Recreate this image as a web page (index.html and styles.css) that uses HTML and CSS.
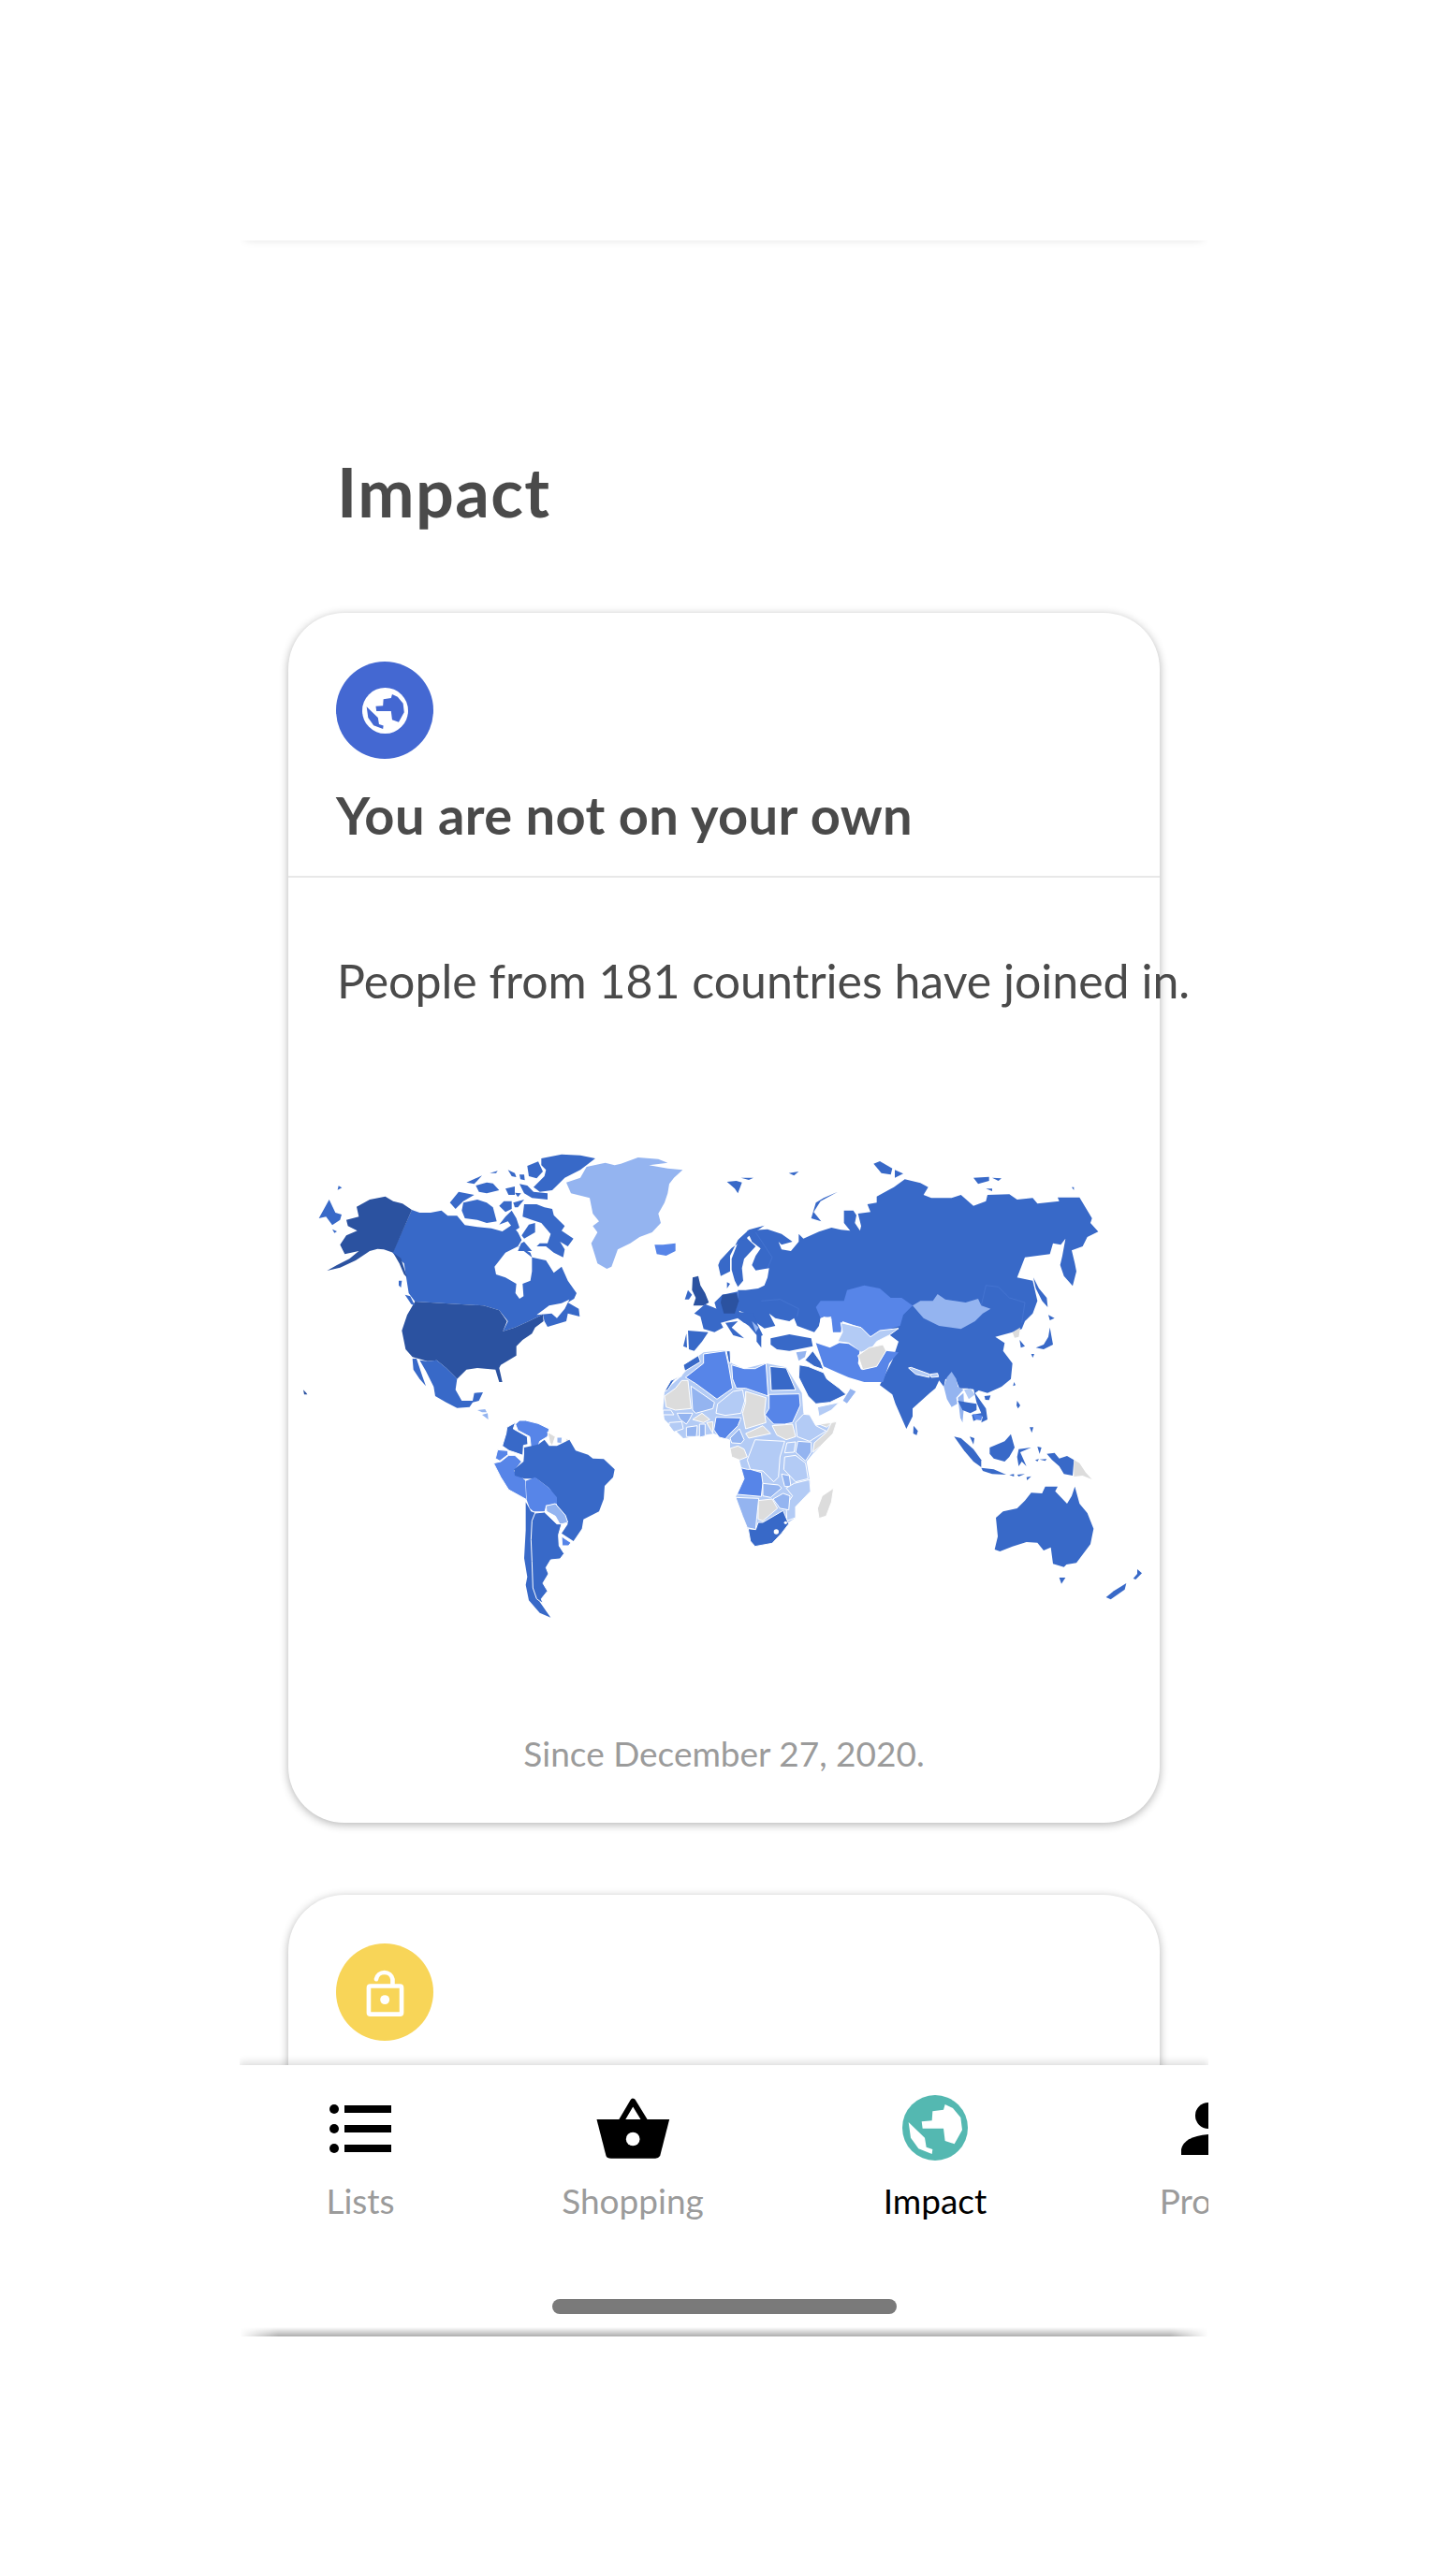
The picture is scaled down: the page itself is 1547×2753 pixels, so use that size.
FILE: index.html
```html
<!DOCTYPE html>
<html lang="en">
<head>
    <meta charset="UTF-8">
    <title>Impact</title>
    <link rel="stylesheet" href="styles.css">
</head>
<body>
<svg class="defs" width="0" height="0">
    <symbol id="globe" viewBox="193 58 210 210">
        <circle class="globe-disc" cx="298" cy="163" r="105"/>
        <path class="globe-land" d="M330 88 L325 105 L290 110 L288 140 L255 143 L258 165 L325 165 L330 205 L360 215 L385 170 L380 130 L355 100 Z"/>
        <path class="globe-land" d="M213 145 L265 195 L270 225 L290 232 L288 247 L245 230 L220 195 Z"/>
    </symbol>
</svg>
<div class="phone">
    <header class="top"></header>
    <main class="screen">
        <h1 class="page-title">Impact</h1>
        <section class="card">
            <div class="card-head">
                <div class="badge badge-blue">
                    <svg class="badge-globe"><use href="#globe"/></svg>
                </div>
                <h2 class="card-title">You are not on your own</h2>
            </div>
            <p class="card-text">People from 181 countries have joined in.</p>
            <svg class="map" viewBox="308 1200 931 560" width="931" height="560">
                <!-- north america -->
                <g transform="translate(320 1220) scale(.33333)">
                    <path class="mid" d="M125 136 L136 142 L122 149 Z"/>
                    <path class="mid" d="M95 180 L115 222 L135 228 L130 245 L105 262 L85 235 L62 240 Z"/>
                    <path class="mid" d="M105 275 L120 282 L112 287 Z"/>
                    <path class="mid" d="M360 213 L385 222 L420 222 L455 215 L475 232 L505 232 L530 262 L570 268 L615 272 L650 282 L680 262 L700 285 L712 310 L700 330 L740 350 L745 365 L790 375 L815 415 L840 395 L860 440 L888 480 L880 498 L860 510 L895 530 L898 555 L860 545 L855 570 L795 588 L785 570 L780 548 L730 572 L690 590 L652 602 L668 570 L640 535 L590 520 L370 507 L350 480 L342 430 L335 385 L298 350 Z"/>
                    <path class="white" d="M625 395 L660 350 L700 330 L745 365 L745 410 L740 440 L715 450 L718 490 L705 498 L692 480 L695 450 L660 430 L630 420 Z"/>
                    <path class="white" d="M760 550 L800 520 L840 512 L865 500 L850 530 L825 560 L808 545 Z"/>
                    <path class="mid" d="M775 48 L840 35 L900 38 L948 48 L900 85 L850 110 L810 150 L770 155 L750 140 L785 105 L790 85 L775 70 Z"/>
                    <path class="mid" d="M730 72 L765 58 L780 90 L760 112 L735 105 Z"/>
                    <path class="mid" d="M535 125 L585 103 L560 130 Z"/>
                    <path class="mid" d="M565 135 L600 125 L620 128 L640 150 L600 160 L575 155 Z"/>
                    <path class="mid" d="M610 95 L635 88 L630 95 Z"/>
                    <path class="mid" d="M668 85 L690 95 L695 108 L680 105 Z"/>
                    <path class="mid" d="M705 100 L720 100 L722 118 L708 115 Z"/>
                    <path class="mid" d="M660 145 L690 138 L690 165 L670 165 Z"/>
                    <path class="mid" d="M690 158 L710 160 L700 172 Z"/>
                    <path class="mid" d="M705 130 L730 135 L750 155 L795 160 L795 180 L745 175 L720 160 Z"/>
                    <path class="mid" d="M655 185 L680 185 L680 210 L660 220 L640 200 Z"/>
                    <path class="mid" d="M685 190 L720 180 L700 205 L690 205 Z"/>
                    <path class="mid" d="M510 155 L560 165 L525 185 L500 210 L482 190 Z"/>
                    <path class="mid" d="M525 190 L570 180 L600 190 L620 205 L632 250 L600 255 L570 245 L530 240 L520 215 Z"/>
                    <path class="mid" d="M660 235 L680 215 L695 240 L705 270 L690 280 L668 250 L640 260 Z"/>
                    <path class="mid" d="M720 195 L760 195 L785 205 L810 210 L815 230 L850 265 L840 280 L878 305 L860 330 L835 315 L850 340 L845 365 L815 350 L790 330 L760 330 L770 320 L795 320 L805 290 L775 255 L745 245 L715 235 Z"/>
                    <path class="mid" d="M735 260 L755 255 L755 285 L720 305 L712 295 Z"/>
                    <path class="mid" d="M710 320 L720 315 L745 345 L700 345 Z"/>
                    <path class="pale" d="M1030 65 L1085 45 L1150 50 L1180 62 L1120 70 L1180 80 L1228 85 L1200 110 L1185 130 L1180 160 L1170 190 L1150 225 L1158 255 L1130 285 L1090 300 L1060 320 L1020 340 L1000 395 L985 402 L955 385 L935 320 L955 285 L940 265 L960 250 L940 225 L930 175 L870 160 L855 125 L900 110 L920 75 L980 62 L1010 70 Z"/>
                    <path class="light" d="M1138 325 L1165 325 L1205 320 L1205 345 L1175 360 L1145 355 Z"/>
                    <path class="dark" d="M360 213 L300 350 L270 340 L250 338 L225 345 L215 352 L180 375 L130 398 L88 408 L120 390 L160 370 L190 345 L145 355 L130 325 L150 295 L185 280 L155 265 L150 245 L190 235 L183 203 L225 180 L275 170 L300 185 L330 193 Z"/>
                    <path class="dark" d="M300 350 L325 368 L345 430 L335 420 L320 385 Z"/>
                    <path class="dark" d="M370 507 L590 520 L640 535 L665 570 L652 602 L690 590 L730 572 L780 548 L782 570 L755 590 L745 610 L715 630 L695 650 L695 680 L645 710 L640 720 L650 765 L640 765 L628 725 L570 720 L535 725 L505 755 L495 745 L470 720 L440 695 L410 698 L362 685 L340 660 L328 600 L345 550 Z"/>
                    <path class="mid" d="M385 695 L410 698 L440 695 L470 720 L495 745 L505 755 L500 790 L520 825 L555 825 L560 800 L588 798 L575 825 L555 830 L545 845 L505 848 L470 830 L435 810 L430 780 L405 730 Z"/>
                    <path class="mid" d="M362 690 L375 690 L395 750 L405 778 L385 755 L365 725 Z"/>
                    <path class="mid" d="M318 440 L328 440 L325 462 L318 455 Z"/>
                    <path class="mid" d="M338 485 L355 490 L370 520 L358 515 Z"/>
                    <path class="dark" d="M12 790 L22 800 L25 805 L15 805 Z"/>
                    <path class="pale" d="M570 855 L595 852 L600 862 L585 862 Z"/>
                    <path class="pale" d="M585 870 L603 865 L605 885 Z"/>
                </g>
                <!-- south america -->
                <g class="lined" transform="translate(480 1510) scale(.33333)">
                    <path class="mid" d="M212 25 L205 45 L250 70 L252 95 L238 98 L236 130 L208 120 L192 115 L170 100 L182 60 L185 40 Z"/>
                    <path class="light" d="M225 18 L245 18 L285 28 L320 45 L315 70 L290 85 L285 100 L262 105 L258 70 L220 50 L212 30 Z"/>
                    <path class="grey" d="M315 55 L340 70 L330 100 L322 88 Z"/>
                    <path class="pale" d="M345 72 L362 72 L360 92 L345 90 Z"/>
                    <path class="grey" d="M372 75 L388 82 L378 95 Z"/>
                    <path class="light" d="M155 112 L188 115 L188 128 L162 148 L148 140 Z"/>
                    <path class="light" d="M142 155 L165 150 L190 130 L210 130 L232 150 L208 180 L245 210 L248 272 L190 240 L165 200 Z"/>
                    <path class="mid noline" d="M240 105 L285 95 L305 80 L320 100 L345 100 L385 80 L405 115 L445 128 L460 140 L495 142 L530 175 L525 200 L498 228 L495 270 L480 310 L430 335 L425 365 L398 405 L360 380 L380 350 L365 320 L345 290 L340 265 L320 235 L280 205 L240 205 L210 195 L208 175 L238 150 L240 125 Z"/>
                    <path class="light noline" d="M245 212 L275 200 L320 235 L345 265 L345 285 L310 290 L305 310 L270 310 L258 300 L248 272 Z"/>
                    <path class="pale" d="M310 292 L340 285 L372 322 L380 345 L355 352 L340 325 L312 310 Z"/>
                    <path class="light" d="M360 390 L390 410 L382 420 L362 420 Z"/>
                    <path class="mid noline" d="M245 280 L262 310 L290 320 L290 600 L325 650 L290 635 L255 595 L245 545 L250 520 L240 460 L245 370 Z"/>
                    <path class="mid" d="M275 315 L305 312 L345 350 L360 350 L350 385 L352 420 L368 445 L355 462 L325 465 L310 490 L318 510 L300 540 L315 565 L295 590 L300 605 L280 590 L268 555 L265 470 L262 400 L265 340 Z"/>
                </g>
                <!-- eurasia -->
                <g transform="translate(720 1225) scale(.33333)">
                    <path class="mid" d="M300 260 L345 275 L380 300 L345 310 L335 300 L345 325 L375 330 L400 300 L400 275 L415 290 L465 268 L505 255 L535 262 L565 265 L545 240 L545 200 L575 200 L585 215 L580 240 L600 270 L600 295 L590 290 L600 250 L590 210 L630 205 L620 180 L650 175 L650 155 L705 125 L740 100 L790 112 L815 125 L800 150 L825 160 L890 160 L920 150 L960 185 L1000 170 L1005 150 L1075 148 L1100 165 L1150 160 L1165 178 L1235 170 L1230 158 L1300 158 L1340 225 L1335 240 L1360 268 L1325 285 L1310 315 L1275 328 L1285 370 L1290 395 L1278 442 L1250 410 L1238 375 L1245 345 L1255 290 L1240 310 L1215 305 L1205 340 L1125 350 L1100 415 L1150 425 L1165 490 L1150 530 L1125 555 L1115 580 L1085 590 L1030 605 L1060 625 L1055 650 L1085 690 L1080 740 L1050 765 L1005 785 L970 775 L940 770 L915 770 L905 745 L870 740 L865 765 L850 745 L838 770 L820 785 L765 835 L765 860 L745 900 L710 820 L700 790 L660 760 L700 680 L720 620 L640 560 L500 530 L470 545 L465 570 L450 590 L395 570 L385 545 L370 555 L345 550 L325 545 L305 530 L325 570 L290 578 L265 560 L255 545 L230 530 L205 520 L205 455 L230 455 L270 450 L290 440 L300 415 L305 385 L262 392 L250 375 L262 345 L278 322 L250 300 L235 265 Z"/>
                    <path class="mid" d="M130 495 L155 470 L205 460 L210 530 L255 545 L268 565 L225 560 L205 545 L150 560 Z"/>
                    <path class="border" d="M985 505 L1000 440 L1040 445 L1075 480 L1125 495 L1115 560"/>
                    <path class="border" d="M262 270 L315 350 L300 385"/>
                    <path class="border" d="M280 490 L340 485 L400 515 L395 540"/>
                    <path class="mid" d="M210 290 L235 270 L235 290 L262 315 L225 355 L218 385 L222 425 L205 445 L195 425 L185 390 L185 355 Z"/>
                    <path class="mid" d="M290 248 L240 262 L205 295 L180 345 L180 395 L150 410 L142 375 L148 360 L185 320 Z"/>
                    <path class="mid" d="M170 430 L180 435 L170 450 Z"/>
                    <path class="mid" d="M170 108 L200 105 L218 110 L205 145 L195 130 Z"/>
                    <path class="mid" d="M215 95 L255 95 L240 102 Z"/>
                    <path class="mid" d="M368 80 L400 75 L385 88 Z"/>
                    <path class="mid" d="M525 140 L480 160 L455 175 L440 225 L472 235 L448 205 L470 170 Z"/>
                    <path class="mid" d="M960 95 L1010 92 L1010 105 L975 115 Z"/>
                    <path class="mid" d="M1020 95 L1050 97 L1040 105 Z"/>
                    <path class="mid" d="M1000 130 L1020 130 L1020 138 Z"/>
                    <path class="mid" d="M640 50 L660 42 L700 65 L695 85 L665 80 Z"/>
                    <path class="mid" d="M708 70 L735 82 L708 95 Z"/>
                    <path class="mid" d="M1275 125 L1282 125 L1282 135 Z"/>
                    <path class="mid" d="M1152 415 L1170 450 L1195 480 L1198 510 L1180 490 L1160 450 Z"/>
                    <path class="mid" d="M1200 535 L1220 545 L1205 552 Z"/>
                    <path class="mid" d="M1205 575 L1215 630 L1185 645 L1160 640 L1185 630 L1200 605 Z"/>
                    <path class="mid" d="M1145 660 L1155 660 L1150 672 Z"/>
                    <path class="mid" d="M1108 615 L1125 635 L1112 640 Z"/>
                    <path class="grey" d="M1085 590 L1110 575 L1105 605 L1092 608 Z"/>
                    <path class="light" d="M455 510 L470 490 L545 490 L555 455 L610 440 L660 450 L695 480 L730 480 L765 505 L735 535 L725 570 L705 575 L670 590 L640 610 L625 600 L600 575 L540 555 L535 590 L510 590 L505 545 L480 540 L470 545 Z"/>
                    <path class="pale" d="M765 505 L790 490 L830 490 L845 468 L870 485 L900 490 L935 495 L975 483 L985 505 L1015 515 L990 530 L965 555 L920 580 L850 570 L800 545 Z"/>
                    <path class="white" d="M470 545 L505 540 L490 570 L500 600 L525 625 L500 640 L470 620 L465 580 Z"/>
                    <path class="paler stroked" d="M535 560 L600 575 L630 605 L660 585 L720 578 L690 600 L650 620 L635 640 L600 655 L560 625 L525 620 L540 590 Z"/>
                    <path class="light" d="M455 625 L500 640 L530 625 L560 628 L595 650 L590 690 L600 710 L650 700 L680 650 L720 655 L690 690 L670 750 L610 750 L560 735 L525 720 L480 700 L470 670 Z"/>
                    <path class="grey stroked" d="M590 665 L625 640 L670 630 L680 650 L650 700 L605 710 Z"/>
                    <path class="paler stroked" d="M752 705 L760 703 L820 725 L818 735 L775 725 Z"/>
                    <path class="paler stroked" d="M822 725 L845 722 L848 733 L825 735 Z"/>
                    <path class="dark" d="M60 415 L78 410 L85 440 L100 465 L112 495 L95 505 L62 505 L70 480 L58 455 Z"/>
                    <path class="mid" d="M45 455 L58 470 L48 485 L35 485 Z"/>
                    <path class="mid" d="M100 500 L125 510 L150 520 L150 560 L158 575 L130 590 L95 580 L85 540 L65 530 Z"/>
                    <path class="dark" d="M155 470 L200 465 L208 490 L195 530 L160 530 L150 495 Z"/>
                    <path class="mid" d="M45 585 L110 590 L90 620 L65 650 L48 645 Z"/>
                    <path class="mid" d="M40 595 L30 635 L42 640 Z"/>
                    <path class="mid" d="M165 560 L205 555 L185 575 L225 610 L190 600 Z"/>
                    <path class="mid" d="M205 525 L255 530 L268 565 L285 600 L270 605 L240 570 L205 545 Z"/>
                    <path class="pale" d="M250 555 L272 575 L262 590 Z"/>
                    <path class="mid" d="M265 600 L280 590 L280 640 L265 620 Z"/>
                    <path class="mid" d="M310 610 L370 597 L440 610 L445 635 L370 650 L330 645 L310 630 Z"/>
                    <path class="pale" d="M392 655 L425 650 L420 670 L400 682 Z"/>
                </g>
                <!-- africa and arabia -->
                <g class="lined" transform="translate(700 1440) scale(.33333)">
                    <path class="paler noline" d="M30 135 L85 85 L140 20 L155 10 L225 3 L245 45 L285 62 L355 45 L420 58 L470 140 L475 205 L515 245 L582 232 L570 270 L505 335 L485 360 L495 418 L498 455 L450 505 L450 540 L420 560 L375 622 L320 632 L295 572 L258 475 L262 465 L285 415 L270 355 L240 320 L240 290 L188 270 L90 285 L30 225 L25 195 Z"/>
                    <path class="mid" d="M90 50 L138 20 L145 40 L95 70 Z"/>
                    <path class="mid" d="M30 135 L50 100 L85 85 L60 100 L40 130 Z"/>
                    <path class="light" d="M97 90 L155 45 L155 15 L225 5 L235 50 L248 125 L198 160 L130 110 Z"/>
                    <path class="light" d="M245 50 L285 62 L320 62 L355 45 L362 150 L290 125 L260 125 L248 95 Z"/>
                    <path class="mid" d="M368 55 L420 60 L450 130 L372 132 Z"/>
                    <path class="mid" d="M228 5 L240 5 L242 45 L235 40 Z"/>
                    <path class="light" d="M365 145 L462 143 L465 180 L440 235 L415 240 L380 240 L352 210 L365 190 Z"/>
                    <path class="mid" d="M462 50 L490 55 L540 75 L550 95 L590 125 L612 145 L560 170 L515 175 L490 150 L460 90 Z"/>
                    <path class="paler" d="M520 185 L590 170 L565 195 L525 215 Z"/>
                    <path class="pale" d="M600 165 L625 125 L645 135 L615 175 Z"/>
                    <path class="mid" d="M480 35 L505 5 L530 40 L540 65 L510 55 Z"/>
                    <path class="grey" d="M30 150 L65 125 L85 100 L105 100 L115 190 L65 195 L35 185 Z"/>
                    <path class="pale" d="M115 118 L190 170 L185 190 L130 205 L120 195 Z"/>
                    <path class="paler" d="M200 175 L250 135 L280 130 L287 165 L275 205 L225 212 L195 205 Z"/>
                    <path class="grey" d="M290 135 L355 155 L350 205 L355 235 L290 255 L280 205 L290 170 Z"/>
                    <path class="paler" d="M25 195 L50 195 L60 210 L25 210 Z"/>
                    <path class="pale" d="M70 205 L120 205 L110 225 L100 240 L80 225 Z"/>
                    <path class="grey" d="M120 225 L150 205 L175 225 L155 235 Z"/>
                    <path class="pale" d="M100 250 L135 245 L132 280 L100 280 Z"/>
                    <path class="pale" d="M142 240 L160 240 L160 278 L142 282 Z"/>
                    <path class="paler" d="M45 235 L85 232 L90 255 L60 265 L45 245 Z"/>
                    <path class="grey" d="M165 235 L185 232 L185 270 Z"/>
                    <path class="light" d="M195 218 L275 220 L265 245 L240 270 L225 287 L205 282 L188 258 Z"/>
                    <path class="pale" d="M240 285 L270 255 L285 290 L275 302 L245 300 Z"/>
                    <path class="grey" d="M240 318 L265 310 L285 320 L295 345 L270 355 L245 345 Z"/>
                    <path class="grey" d="M290 270 L345 245 L370 270 L300 285 Z"/>
                    <path class="grey" d="M375 245 L440 240 L450 280 L420 290 L390 275 Z"/>
                    <path class="paler" d="M450 235 L475 208 L495 210 L515 245 L548 262 L495 295 L455 280 Z"/>
                    <path class="grey" d="M505 330 L510 300 L550 265 L565 235 L582 232 L570 270 L530 310 Z"/>
                    <path class="grey" d="M525 240 L565 235 L550 250 Z"/>
                    <path class="pale" d="M457 295 L500 298 L500 330 L482 358 L450 330 Z"/>
                    <path class="paler" d="M422 300 L450 297 L445 330 L415 332 Z"/>
                    <path class="paler" d="M320 290 L415 295 L400 345 L395 410 L380 425 L345 390 L305 385 L295 355 Z"/>
                    <path class="paler" d="M415 345 L450 340 L482 365 L490 415 L450 425 L412 385 Z"/>
                    <path class="light" d="M275 380 L295 385 L305 385 L340 395 L345 430 L340 472 L262 465 L285 415 Z"/>
                    <path class="pale" d="M345 430 L395 435 L405 445 L370 475 L345 470 Z"/>
                    <path class="pale" d="M405 400 L430 405 L435 440 L415 440 Z"/>
                    <path class="paler" d="M445 430 L495 418 L498 455 L450 505 L450 540 L422 550 L420 500 L440 470 L420 445 Z"/>
                    <path class="pale" d="M378 480 L410 462 L432 470 L428 515 L400 510 Z"/>
                    <path class="grey" d="M330 485 L375 480 L392 510 L345 550 L330 545 Z"/>
                    <path class="pale" d="M258 475 L332 478 L325 545 L322 578 L295 572 L280 535 Z"/>
                    <path class="mid" d="M298 575 L322 578 L330 555 L345 555 L410 517 L428 560 L405 590 L375 622 L320 632 L305 615 Z"/>
                    <circle class="white" cx="388" cy="585" r="8"/>
                    <circle class="white" cx="418" cy="556" r="5"/>
                    <path class="grey" d="M572 445 L565 490 L548 535 L525 542 L520 510 L535 470 Z"/>
                </g>
                <!-- south east asia and oceania -->
                <g transform="translate(940 1440) scale(.33333)">
                    <path class="mid" d="M108 245 L122 262 L118 275 L107 270 Z"/>
                    <path class="pale" d="M205 120 L215 90 L230 72 L245 95 L250 120 L268 130 L245 155 L248 175 L230 185 L215 160 Z"/>
                    <path class="pale" d="M250 155 L268 140 L270 180 L265 235 L258 220 Z"/>
                    <path class="mid" d="M250 165 L280 170 L310 175 L310 195 L290 205 L265 195 Z"/>
                    <path class="paler" d="M270 130 L290 125 L305 145 L285 160 Z"/>
                    <path class="mid" d="M300 125 L320 130 L305 140 L340 190 L345 225 L325 235 L330 215 L300 230 L295 210 L325 205 L310 170 Z"/>
                    <path class="light" d="M298 208 L328 212 L325 228 L305 225 Z"/>
                    <path class="mid" d="M335 150 L355 148 L350 163 L338 162 Z"/>
                    <path class="mid" d="M430 105 L435 115 L427 118 Z"/>
                    <path class="mid" d="M440 165 L450 180 L443 190 L438 180 Z"/>
                    <path class="mid" d="M480 250 L492 250 L487 268 Z"/>
                    <path class="mid" d="M238 280 L260 285 L300 320 L325 355 L325 378 L300 360 L270 325 Z"/>
                    <path class="mid" d="M325 380 L365 385 L405 402 L360 400 L330 390 Z"/>
                    <path class="mid" d="M288 280 L303 285 L300 305 Z"/>
                    <path class="mid" d="M352 315 L375 305 L400 295 L420 272 L432 315 L415 345 L400 360 L365 350 L352 335 Z"/>
                    <path class="mid" d="M445 320 L485 315 L450 330 L470 375 L455 360 L445 375 L440 345 Z"/>
                    <path class="mid" d="M505 312 L518 315 L512 335 Z"/>
                    <path class="mid" d="M498 355 L510 352 L505 360 Z"/>
                    <path class="mid" d="M512 353 L535 352 L530 358 Z"/>
                    <path class="mid" d="M415 403 L430 400 L430 408 Z"/>
                    <path class="mid" d="M440 402 L465 400 L445 408 Z"/>
                    <path class="mid" d="M470 410 L485 407 L472 420 Z"/>
                    <path class="mid" d="M535 335 L560 332 L575 350 L600 342 L622 355 L618 405 L590 400 L575 375 L552 355 Z"/>
                    <path class="grey" d="M622 355 L640 365 L660 395 L680 417 L650 405 L622 408 Z"/>
                    <path class="mid" d="M372 540 L395 520 L440 510 L465 485 L485 460 L520 462 L530 440 L570 440 L562 455 L600 495 L615 470 L625 440 L640 495 L665 525 L685 575 L675 625 L630 685 L598 690 L590 698 L555 688 L548 635 L525 645 L505 620 L470 618 L425 632 L385 648 L368 642 L378 600 Z"/>
                    <path class="mid" d="M575 732 L595 732 L582 752 Z"/>
                    <path class="mid" d="M825 705 L840 718 L820 738 L812 735 L825 720 Z"/>
                    <path class="mid" d="M790 750 L785 770 L740 802 L725 795 L750 775 Z"/>
                </g>
            </svg>
            <p class="card-note">Since December 27, 2020.</p>
        </section>
        <section class="card">
            <div class="card-head">
                <div class="badge badge-yellow">
                    <svg class="badge-lock" viewBox="270 125 128 160">
                        <path d="M305 162 A27 27 0 0 1 358 162 L358 178"/>
                        <rect x="281" y="184" width="106" height="91" rx="5"/>
                        <circle cx="333" cy="228" r="15"/>
                    </svg>
                </div>
            </div>
        </section>
    </main>
    <nav class="tabbar">
        <div class="tabs">
            <div class="tab">
                <svg class="tab-icon icon-lists" viewBox="0 0 66 56">
                    <circle cx="5" cy="7" r="5"/><rect x="16" y="3" width="50" height="8"/>
                    <circle cx="5" cy="28" r="5"/><rect x="16" y="24" width="50" height="8"/>
                    <circle cx="5" cy="49" r="5"/><rect x="16" y="45" width="50" height="8"/>
                </svg>
                <span class="tab-label">Lists</span>
            </div>
            <div class="tab">
                <svg class="tab-icon icon-basket" viewBox="945 55 245 210">
                    <path class="basket-handle" d="M1030 140 L1068 75 L1108 140"/>
                    <path d="M952 133 L1185 133 L1155 250 Q1150 258 1140 258 L998 258 Q985 258 982 250 Z"/>
                    <circle class="basket-hole" cx="1068" cy="196" r="22"/>
                </svg>
                <span class="tab-label">Shopping</span>
            </div>
            <div class="tab tab-active">
                <svg class="tab-icon icon-globe"><use href="#globe"/></svg>
                <span class="tab-label">Impact</span>
            </div>
            <div class="tab">
                <svg class="tab-icon icon-person" viewBox="0 0 58 56">
                    <circle cx="29" cy="14" r="14"/>
                    <path d="M0 56 L0 50 Q3 36 29 34 Q55 36 58 50 L58 56 Z"/>
                </svg>
                <span class="tab-label">Profile</span>
            </div>
        </div>
        <div class="home-bar"></div>
    </nav>
</div>
</body>
</html>
```

FILE: styles.css
```css
* {
    margin: 0;
    padding: 0;
    box-sizing: border-box;
}

body {
    background: #fff;
    font-family: "Lato", "Noto Sans", sans-serif;
    color: #4a4a4a;
}

.defs {
    position: absolute;
}

.phone {
    width: 1035px;
    height: 2497px;
    margin: 0 auto;
    display: flex;
    flex-direction: column;
    overflow: hidden;
}

.top {
    height: 257px;
    flex: none;
    background: #fff;
    box-shadow: 0 4px 10px -6px rgba(0, 0, 0, .16);
    position: relative;
    z-index: 1;
}

.screen {
    flex: 1;
    min-height: 0;
    overflow: hidden;
    padding: 225px 52px 0;
}

.page-title {
    font-size: 72px;
    line-height: 86px;
    font-weight: 700;
    letter-spacing: 1.4px;
    margin: 0 0 87px 52px;
}

.card {
    background: #fff;
    border-radius: 60px;
    box-shadow: 0 2px 10px rgba(0, 0, 0, .3);
    margin-bottom: 77px;
    padding-bottom: 52px;
}

.card-head {
    padding: 52px 51px 0;
    height: 283px;
    border-bottom: 2px solid #e8e8e8;
}

.badge {
    width: 104px;
    height: 104px;
    border-radius: 50%;
    display: flex;
    align-items: center;
    justify-content: center;
}

.badge-blue {
    background: #4468d2;
    --disc: #fff;
    --land: #4468d2;
}

.badge-yellow {
    background: #f8d558;
}

.badge-globe {
    width: 49px;
    height: 49px;
}

.badge-lock {
    width: 43px;
    height: 53px;
    fill: none;
    stroke: #fff;
    stroke-width: 14;
    stroke-linecap: round;
}

.badge-lock circle {
    fill: #fff;
    stroke: none;
}

.globe-disc {
    fill: var(--disc);
}

.globe-land {
    fill: var(--land);
}

.card-title {
    font-size: 56px;
    line-height: 64px;
    font-weight: 700;
    letter-spacing: .4px;
    margin-top: 28px;
    white-space: nowrap;
}

.card-text {
    font-size: 50px;
    line-height: 60px;
    margin: 80px 0 0 52px;
    white-space: nowrap;
}

.map {
    display: block;
    margin-top: 124px;
}

.map path {
    stroke-linejoin: round;
}

.dark { fill: #2b52a0; }
.mid { fill: #3869c8; }
.light { fill: #5785e8; }
.pale { fill: #94b4f0; }
.paler { fill: #b3cbf5; }
.grey { fill: #dcdcdc; }
.white { fill: #fff; }

.border {
    fill: none;
    stroke: #4a78d4;
    stroke-width: 2;
}

.lined path,
.stroked {
    stroke: #fff;
    stroke-width: 3;
}

.lined .noline {
    stroke: none;
}

.card-note {
    font-size: 37px;
    line-height: 44px;
    color: #9b9b9b;
    text-align: center;
    margin-top: 90px;
}

.tabbar {
    flex: none;
    height: 290px;
    background: #fff;
    box-shadow: 0 -3px 8px rgba(0, 0, 0, .14);
    position: relative;
    display: flex;
    flex-direction: column;
}

.tabbar::after {
    content: "";
    position: absolute;
    left: 0;
    right: 0;
    bottom: 0;
    height: 10px;
    background: linear-gradient(to bottom, rgba(0, 0, 0, 0), rgba(0, 0, 0, .32));
    -webkit-mask-image: linear-gradient(to right, transparent, #000 4%, #000 96%, transparent);
    mask-image: linear-gradient(to right, transparent, #000 4%, #000 96%, transparent);
}

.tabs {
    display: grid;
    grid-template-columns: 178px 404px 242px 342px;
    padding: 32px 0 0 40px;
    overflow: hidden;
    width: 100%;
    flex: none;
}

.tab {
    display: flex;
    flex-direction: column;
    align-items: center;
    min-width: 0;
}

.tab-icon {
    height: 70px;
    width: 70px;
}

.icon-lists {
    width: 66px;
    height: 56px;
    margin: 8px 0 6px;
}

.icon-basket {
    width: 82px;
}

.basket-handle {
    fill: none;
    stroke: #000;
    stroke-width: 18;
    stroke-linejoin: round;
}

.basket-hole {
    fill: #fff;
}

.icon-person {
    width: 58px;
    height: 56px;
    margin: 8px 0 6px;
}

.icon-globe {
    --disc: #54b8b1;
    --land: #fff;
}

.tab-label {
    font-size: 37px;
    line-height: 44px;
    margin-top: 21px;
    color: #9b9b9b;
    white-space: nowrap;
}

.tab-active .tab-label {
    color: #000;
}

.home-bar {
    width: 368px;
    height: 16px;
    border-radius: 8px;
    background: #7a7a7a;
    margin: 83px auto 0;
}
```
